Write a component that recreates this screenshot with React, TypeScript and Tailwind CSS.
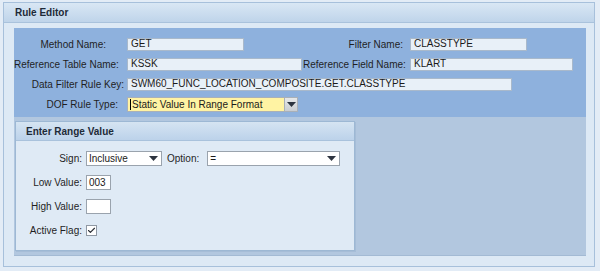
import { Check } from 'lucide-react';

const font = { fontFamily: '"Liberation Sans", Arial, sans-serif' };

function TextField({ value, width }: { value: string; width: string }) {
  return (
    <div className={`${width} h-[13px] bg-[#e8f0f8] border border-[#a9b9cb] flex items-center px-[3px] text-[10px] text-[#1a1a1a] leading-none whitespace-nowrap`}>
      {value}
    </div>
  );
}

function Caret() {
  return (
    <svg width="9" height="5" viewBox="0 0 9 5">
      <path d="M0 0 H9 L4.5 5 Z" fill="#2d3440" />
    </svg>
  );
}

function TopRow({ label, pr, children }: { label: string; pr: string; children: React.ReactNode }) {
  return (
    <div className="h-[20px] flex items-center">
      <div className={`w-[113px] shrink-0 text-right whitespace-nowrap ${pr} text-[10px] text-[#1f1f1f]`}>{label}</div>
      {children}
    </div>
  );
}

function RangeRow({ label, children }: { label: string; children: React.ReactNode }) {
  return (
    <div className="h-[24px] flex items-center">
      <div className="w-[66px] shrink-0 text-right whitespace-nowrap text-[10px] text-[#1f1f1f]">{label}</div>
      <div className="ml-[4px] flex items-center">{children}</div>
    </div>
  );
}

export default function App() {
  return (
    <div className="w-[600px] h-[271px] bg-[#e3ecf6] pt-[2px] pl-[3px]" style={font}>
      <div className="w-[592px] h-[265px] border border-[#a7c0db] bg-[#dde9f5] flex flex-col">
        {/* Header */}
        <div className="h-[20px] bg-gradient-to-b from-[#d9e7f4] to-[#bfd4ea] border-b border-[#a9c2dc] flex items-center pl-[11px]">
          <span className="text-[10px] font-bold text-[#1e2a38]">Rule Editor</span>
        </div>

        {/* Body */}
        <div className="flex-1 pt-[5px] pl-[10px] pr-[8px] pb-[10px] flex">
          <div className="flex-1 flex flex-col border-b border-[#a3bad4]">
            {/* Fields */}
            <div className="h-[89px] bg-[#8eb1dd] pt-[6px]">
              <div className="flex">
                <div className="w-[289px]">
                  <TopRow label="Method Name:" pr="pr-[21px]">
                    <TextField value="GET" width="w-[117px]" />
                  </TopRow>
                </div>
                <div className="flex h-[20px] items-center">
                  <div className="w-[107px] shrink-0 text-right whitespace-nowrap pr-[7px] text-[10px] text-[#1f1f1f]">Filter Name:</div>
                  <TextField value="CLASSTYPE" width="w-[117px]" />
                </div>
              </div>
              <div className="flex">
                <div className="w-[289px]">
                  <TopRow label="Reference Table Name:" pr="pr-[9px]">
                    <TextField value="KSSK" width="w-[175px]" />
                  </TopRow>
                </div>
                <div className="flex h-[20px] items-center">
                  <div className="w-[107px] shrink-0 text-right whitespace-nowrap pr-[7px] text-[10px] text-[#1f1f1f]">Reference Field Name:</div>
                  <TextField value="KLART" width="w-[163px]" />
                </div>
              </div>
              <TopRow label="Data Filter Rule Key:" pr="pr-[3px]">
                <TextField value="SWM60_FUNC_LOCATION_COMPOSITE.GET.CLASSTYPE" width="w-[385px]" />
              </TopRow>
              <TopRow label="DOF Rule Type:" pr="pr-[9px]">
                <div className="w-[171px] h-[15px] border border-[#a9b0b8] bg-[#fff3a3] flex items-center">
                  <div className="flex-1 flex items-center pl-[2px] text-[10px] text-[#1a1a1a] whitespace-nowrap">
                    <span className="w-px h-[11px] bg-black mr-px" />
                    Static Value In Range Format
                  </div>
                  <div className="w-[13px] h-full bg-gradient-to-b from-[#e6e8ea] to-[#c9cdd2] border-l border-[#a9b0b8] flex items-center justify-center">
                    <Caret />
                  </div>
                </div>
              </TopRow>
            </div>

            {/* Lower area */}
            <div className="flex-1 bg-[#b2c7df] pt-[4px] pl-px pb-[3px]">
              <div className="w-[340px] h-[130px] border border-[#9db8d4] bg-[#dfeaf5] shadow-[1px_1px_0_#a6bdd7] flex flex-col">
                <div className="h-[19px] bg-gradient-to-b from-[#d5e4f2] to-[#bcd2ea] border-b border-[#a9c2dc] flex items-center pl-[10px]">
                  <span className="text-[10px] font-bold text-[#1e2a38]">Enter Range Value</span>
                </div>
                <div className="pt-[5px]">
                  <RangeRow label="Sign:">
                    <div className="w-[76px] h-[15px] bg-white border border-[#9aa3ad] flex items-center justify-between pl-[2px] pr-[3px] text-[10px] text-[#1a1a1a]">
                      Inclusive
                      <Caret />
                    </div>
                    <span className="ml-[5px] text-[10px] text-[#1f1f1f]">Option:</span>
                    <div className="ml-[8px] w-[133px] h-[15px] bg-white border border-[#9aa3ad] flex items-center justify-between pl-[2px] pr-[3px] text-[10px] text-[#1a1a1a]">
                      =
                      <Caret />
                    </div>
                  </RangeRow>
                  <RangeRow label="Low Value:">
                    <div className="w-[25px] h-[15px] bg-white border border-[#9aa3ad] flex items-center pl-[2px] text-[10px] text-[#1a1a1a]">
                      003
                    </div>
                  </RangeRow>
                  <RangeRow label="High Value:">
                    <div className="w-[25px] h-[15px] bg-white border border-[#9aa3ad]" />
                  </RangeRow>
                  <RangeRow label="Active Flag:">
                    <div className="w-[11px] h-[11px] bg-white border border-[#8f98a3] flex items-center justify-center">
                      <Check size={9} strokeWidth={3} color="#2b2f36" />
                    </div>
                  </RangeRow>
                </div>
              </div>
            </div>
          </div>
        </div>
      </div>
    </div>
  );
}
